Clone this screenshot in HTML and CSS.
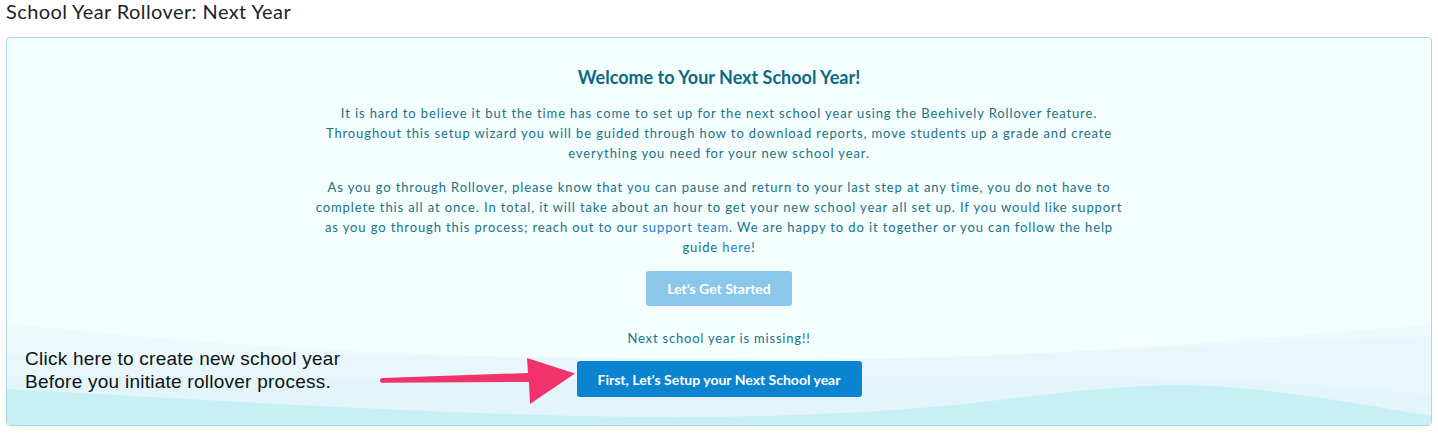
FILE: index.html
```html
<!DOCTYPE html>
<html lang="en">
<head>
<meta charset="utf-8">
<title>School Year Rollover: Next Year</title>
<link rel="stylesheet" href="styles.css">
</head>
<body>
  <h1 class="page-title">School Year Rollover: Next Year</h1>
  <section class="card">
    <svg class="waves" viewBox="0 0 1426 110" preserveAspectRatio="none" aria-hidden="true">
      <path d="M0 8 C 150 25, 350 42, 700 46 C 1000 50, 1250 22, 1426 10 L1426 110 L0 110 Z" fill="#edf9fc"/>
      <path d="M0 40 C 200 42, 450 40, 700 44 C 950 48, 1150 30, 1426 22 L1426 110 L0 110 Z" fill="#e7f7fb"/>
      <path d="M0 60 C 300 62, 600 66, 900 62 C 1100 58, 1300 66, 1426 80 L1426 110 L0 110 Z" fill="#e1f5fa"/>
      <path d="M0 74 C 150 82, 300 92, 500 99 C 650 104, 800 104, 950 90 C 1050 78, 1120 70, 1172 70 C 1250 70, 1350 88, 1426 101 L1426 110 L0 110 Z" fill="#c9eff6"/>
    </svg>
    <div class="content">
      <h2 class="welcome">Welcome to Your Next School Year!</h2>
      <p class="text">It is hard to believe it but the time has come to set up for the next school year using the Beehively Rollover feature. Throughout this setup wizard you will be guided through how to download reports, move students up a grade and create everything you need for your new school year.</p>
      <p class="text">As you go through Rollover, please know that you can pause and return to your last step at any time, you do not have to complete this all at once. In total, it will take about an hour to get your new school year all set up. If you would like support as you go through this process; reach out to our <a class="link" href="#">support team</a>. We are happy to do it together or you can follow the help guide <a class="link" href="#">here</a>!</p>
      <button class="btn btn-disabled" type="button">Let’s Get Started</button>
      <p class="missing">Next school year is missing!!</p>
      <button class="btn btn-primary" type="button">First, Let's Setup your Next School year</button>
    </div>
    <div class="annotation">Click here to create new school year<br>Before you initiate rollover process.</div>
    <svg class="arrow" viewBox="0 0 200 50" aria-hidden="true">
      <path d="M2 26.5 C 2 24.5, 3 24, 5 23.9 L 150 19 L 149 4 L 197 19.5 L 152 50 L 151 28 L 5 28.8 C 3 28.8, 2 28.2, 2 26.5 Z" fill="#f2326c"/>
    </svg>
  </section>
</body>
</html>
```

FILE: styles.css
```css
* { box-sizing: border-box; }

body {
  margin: 0;
  padding: 0 6px;
  background: #ffffff;
  font-family: Lato, "Open Sans", "Liberation Sans", sans-serif;
}

.page-title {
  margin: 0;
  height: 37px;
  font-size: 20px;
  line-height: 22px;
  letter-spacing: 0.4px;
  font-weight: 400;
  color: #222226;
}

.card {
  position: relative;
  height: 389px;
  border: 1px solid #a9d9e1;
  border-radius: 4px;
  background: #f4fdfe;
  overflow: hidden;
}

.waves {
  position: absolute;
  left: 0;
  bottom: 0;
  width: 100%;
  height: 110px;
  z-index: 0;
}

.content {
  position: relative;
  z-index: 1;
  display: flex;
  flex-direction: column;
  align-items: center;
  padding-top: 27px;
  width: 822px;
  margin: 0 auto;
  text-align: center;
}

.welcome {
  margin: 0 0 14px;
  font-size: 18px;
  line-height: 24px;
  font-weight: 700;
  color: #0c6a80;
}

.text {
  margin: 0 0 14px;
  font-size: 13px;
  line-height: 20px;
  letter-spacing: 0.88px;
  color: #1b7285;
}

.link {
  color: #2a7fc0;
  text-decoration: none;
}

.btn {
  border: none;
  border-radius: 3px;
  font-family: Lato, "Open Sans", "Liberation Sans", sans-serif;
  font-weight: 700;
  font-size: 14px;
  color: #ffffff;
  cursor: pointer;
}

.btn-disabled {
  width: 146px;
  height: 35px;
  background: #8ac7eb;
}

.btn-primary {
  width: 285px;
  height: 36px;
  background: #0a83d1;
}

.missing {
  margin: 22px 0 13px;
  font-size: 13px;
  line-height: 20px;
  letter-spacing: 0.8px;
  color: #1b7285;
}

.annotation {
  position: absolute;
  left: 18px;
  top: 309px;
  z-index: 2;
  font-family: "Liberation Sans", Arial, sans-serif;
  font-size: 19px;
  line-height: 23px;
  letter-spacing: 0.25px;
  color: #111111;
}

.arrow {
  position: absolute;
  left: 371px;
  top: 316px;
  width: 200px;
  height: 50px;
  z-index: 2;
}
```
